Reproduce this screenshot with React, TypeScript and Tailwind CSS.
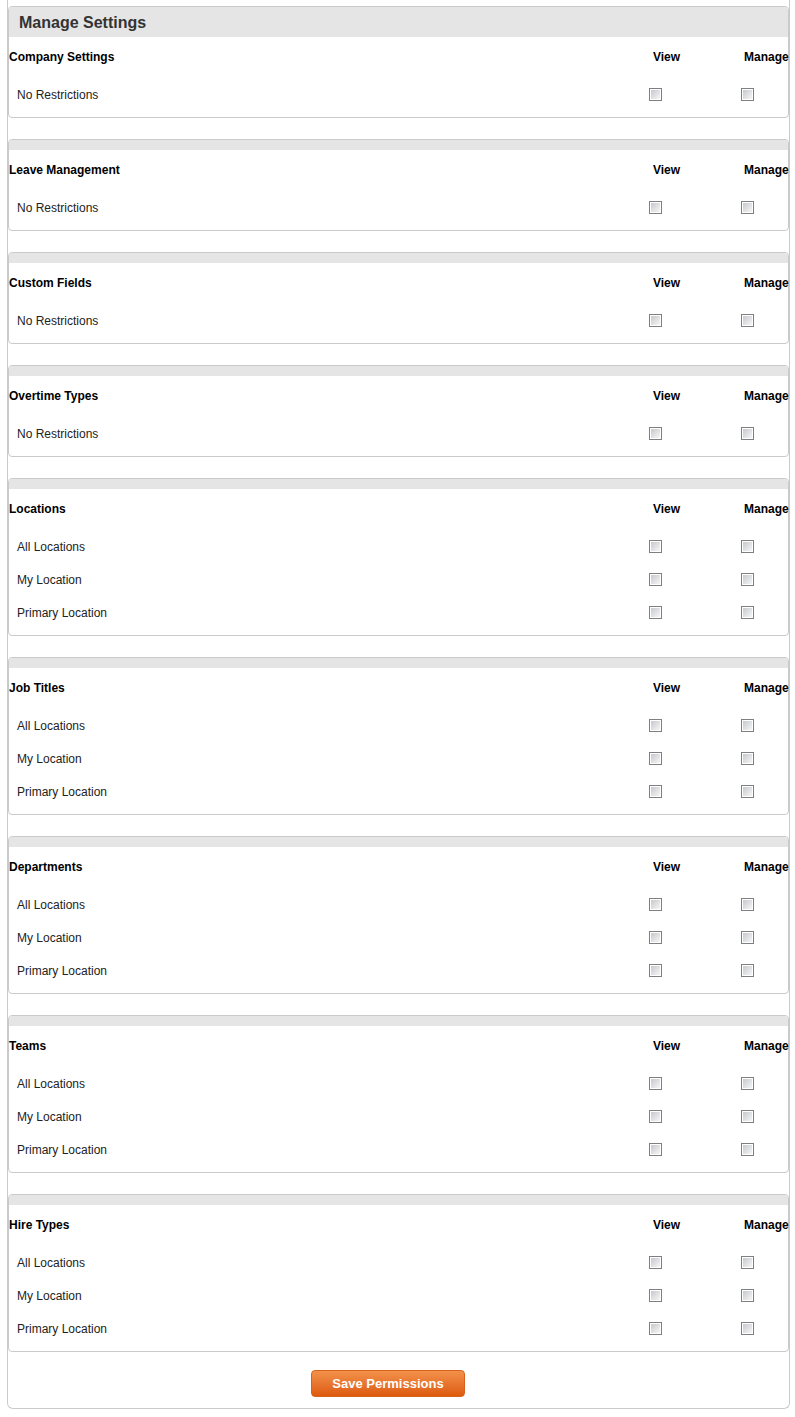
import React from 'react';

type Section = {
  title: string;
  rows: string[];
};

const locationRows = ["All Locations", "My Location", "Primary Location"];

const sections: Section[] = [
  { title: "Company Settings", rows: ["No Restrictions"] },
  { title: "Leave Management", rows: ["No Restrictions"] },
  { title: "Custom Fields", rows: ["No Restrictions"] },
  { title: "Overtime Types", rows: ["No Restrictions"] },
  { title: "Locations", rows: locationRows },
  { title: "Job Titles", rows: locationRows },
  { title: "Departments", rows: locationRows },
  { title: "Teams", rows: locationRows },
  { title: "Hire Types", rows: locationRows },
];

function Checkbox() {
  return (
    <span className="block w-[13px] h-[13px] border border-[#7f7f7f] bg-white p-[1px]">
      <span className="block w-full h-full bg-gradient-to-br from-[#c6c9ce] to-[#f6f6f6]" />
    </span>
  );
}

function Panel({ section, first }: { section: Section; first: boolean }) {
  return (
    <div className="mb-[21px] border border-[#cacaca] rounded-[4px] bg-white overflow-visible">
      {first ? (
        <div className="h-[30px] bg-[#e5e5e5] rounded-t-[3px] flex items-center pl-[10px] pt-[1px]">
          <h2 className="text-[16px] font-bold text-[#333]">Manage Settings</h2>
        </div>
      ) : (
        <div className="h-[10px] bg-[#e5e5e5] rounded-t-[3px]" />
      )}

      <div className="h-[40px] flex items-center text-[12px] font-bold text-black">
        <div className="w-[636px] shrink-0">{section.title}</div>
        <div className="w-[92px] shrink-0 pl-[8px]">View</div>
        <div className="w-[51px] shrink-0 pl-[7px] whitespace-nowrap">Manage</div>
      </div>

      <div className="mt-[1px] pb-[6px]">
        {section.rows.map((row) => (
          <div key={row} className="h-[33px] flex items-center text-[12px] text-[#222]">
            <div className="w-[636px] shrink-0 pl-[8px]">{row}</div>
            <div className="w-[92px] shrink-0 pl-[4px]">
              <Checkbox />
            </div>
            <div className="w-[51px] shrink-0 pl-[4px]">
              <Checkbox />
            </div>
          </div>
        ))}
      </div>
    </div>
  );
}

export default function App() {
  return (
    <div className="min-h-screen bg-white" style={{ fontFamily: '"Liberation Sans", Arial, sans-serif' }}>
      <div className="ml-[7px] w-[783px] border-x border-b border-[#cacaca] rounded-b-[6px] pt-[6px] pb-[11px]">
        {sections.map((s, i) => (
          <Panel key={s.title} section={s} first={i === 0} />
        ))}

        <div className="-mt-[3px] pl-[303px]">
          <button className="w-[154px] h-[27px] pt-[1px] rounded-[4px] border border-[#d8621a] bg-gradient-to-b from-[#f29149] to-[#dd5a08] text-white text-[13px] font-bold">
            Save Permissions
          </button>
        </div>
      </div>
    </div>
  );
}
